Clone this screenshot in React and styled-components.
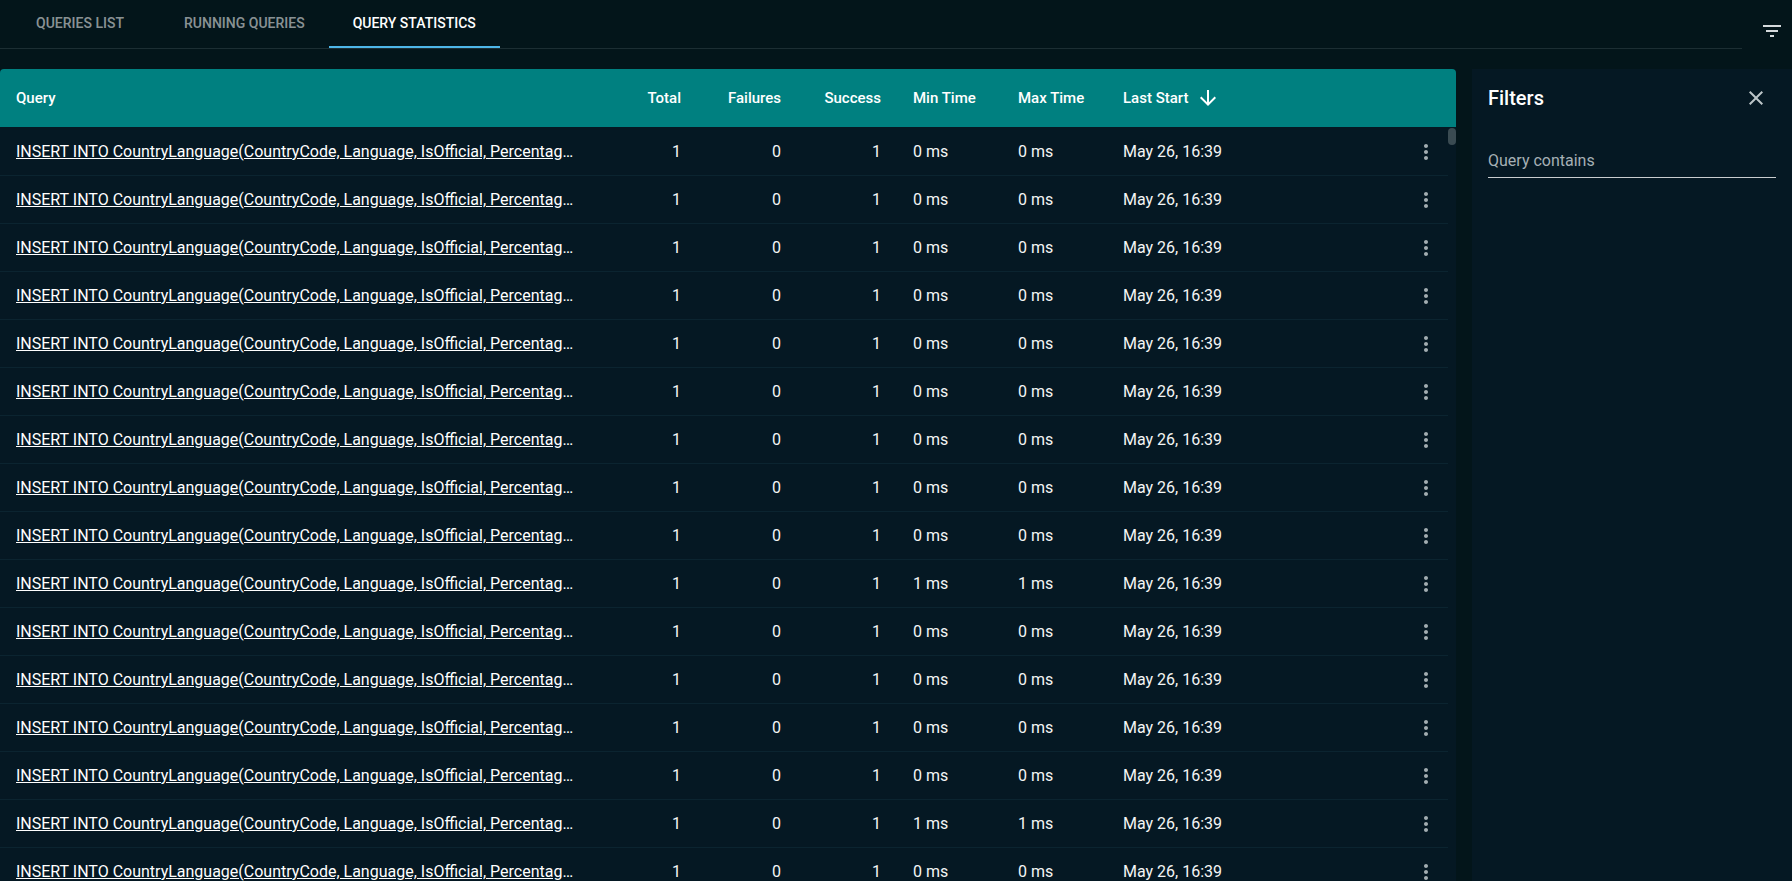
import React from "react";
import styled, { createGlobalStyle } from "styled-components";
import { MdArrowDownward, MdClose, MdFilterList, MdMoreVert } from "react-icons/md";

const GlobalStyle = createGlobalStyle`
  html, body {
    margin: 0;
    height: 100%;
    overflow: hidden;
    background: #03151a;
  }
  #root {
    height: 100%;
  }
  * {
    box-sizing: border-box;
  }
`

const COLUMNS = "558px 107px 100px 100px 137px 105px 1fr 44px";

const Page = styled.div`
  height: 100%;
  display: flex;
  flex-direction: column;
  font-family: Roboto, "Liberation Sans", sans-serif;
  color: #fff;
`
const TopBar = styled.div`
  display: flex;
  height: 69px;
  flex-shrink: 0;
`
const Tabs = styled.div`
  width: 1742px;
  height: 49px;
  display: flex;
  border-bottom: 1px solid #1c2e33;
`
const Tab = styled.div`
  min-width: 160px;
  height: 48px;
  padding: 0 24px;
  display: flex;
  align-items: center;
  justify-content: center;
  font-size: 14px;
  font-weight: 500;
  text-transform: uppercase;
  color: ${(p) => (p.$active ? "#fff" : "rgba(255, 255, 255, 0.55)")};
  border-bottom: 2px solid ${(p) => (p.$active ? "#4db6e8" : "transparent")};
`
const FilterToggle = styled.div`
  flex: 1;
  height: 62px;
  display: flex;
  align-items: center;
  justify-content: flex-end;
  padding-right: 8px;
  color: #d5dadc;
`
const Content = styled.div`
  flex: 1;
  min-height: 0;
  display: flex;
  gap: 16px;
`
const TablePanel = styled.div`
  position: relative;
  width: 1456px;
  display: flex;
  flex-direction: column;
  background: #051823;
  border-radius: 4px 4px 0 0;
  overflow: hidden;
`
const HeaderRow = styled.div`
  display: grid;
  grid-template-columns: ${COLUMNS};
  height: 59px;
  flex-shrink: 0;
  align-items: center;
  padding-left: 16px;
  background: #008080;
  border-bottom: 1px solid #051823;
  font-size: 15px;
  font-weight: 500;
`
const Row = styled.div`
  display: grid;
  grid-template-columns: ${COLUMNS};
  width: 1448px;
  height: 48px;
  flex-shrink: 0;
  align-items: center;
  padding-left: 16px;
  border-bottom: 1px solid #0b2430;
  font-size: 16px;
  color: #f4f5f5;
`
const Cell = styled.div`
  display: flex;
  align-items: center;
  justify-content: ${(p) => (p.$right ? "flex-end" : "flex-start")};
  padding-left: ${(p) => (p.$inset ? "32px" : "0")};
  white-space: nowrap;
`
const QueryLink = styled.a`
  display: block;
  overflow: hidden;
  text-overflow: ellipsis;
  white-space: nowrap;
  color: #fff;
  text-decoration: underline;
`
const SortIcon = styled(MdArrowDownward)`
  margin-left: 8px;
  font-size: 24px;
`
const RowMenu = styled.div`
  display: flex;
  align-items: center;
  justify-content: center;
  font-size: 24px;
  color: #a3adb1;
`
const ScrollThumb = styled.div`
  position: absolute;
  top: 59px;
  right: 0;
  width: 8px;
  height: 17px;
  border-radius: 4px;
  background: #3a4b52;
`
const FilterPanel = styled.div`
  width: 320px;
  padding: 0 16px;
  background: #051823;
`
const FilterHeader = styled.div`
  height: 58px;
  display: flex;
  align-items: center;
  justify-content: space-between;
  font-size: 20px;
  font-weight: 500;
`
const CloseButton = styled.div`
  display: flex;
  margin-right: 8px;
  font-size: 24px;
  color: #bcc5c8;
`
const FilterInput = styled.div`
  margin-top: 20px;
  height: 31px;
  padding-top: 4px;
  border-bottom: 1px solid #c9cdcf;
  font-size: 16px;
  color: #a6b0b5;
`

const rows = Array.from({ length: 20 }, (_, i) => (i === 9 || i === 14 ? 1 : 0));

const App = () => {
  return (
    <Page>
      <GlobalStyle />
      <TopBar>
        <Tabs>
          <Tab>Queries list</Tab>
          <Tab>Running queries</Tab>
          <Tab $active>Query statistics</Tab>
        </Tabs>
        <FilterToggle>
          <MdFilterList size={24} />
        </FilterToggle>
      </TopBar>
      <Content>
        <TablePanel>
          <HeaderRow>
            <Cell>Query</Cell>
            <Cell $right>Total</Cell>
            <Cell $right>Failures</Cell>
            <Cell $right>Success</Cell>
            <Cell $inset>Min Time</Cell>
            <Cell>Max Time</Cell>
            <Cell>
              Last Start
              <SortIcon />
            </Cell>
          </HeaderRow>
          {rows.map((time, i) => (
            <Row key={i}>
              <QueryLink>INSERT INTO CountryLanguage(CountryCode, Language, IsOfficial, Percentage)</QueryLink>
              <Cell $right>1</Cell>
              <Cell $right>0</Cell>
              <Cell $right>1</Cell>
              <Cell $inset>{time} ms</Cell>
              <Cell>{time} ms</Cell>
              <Cell>May 26, 16:39</Cell>
              <RowMenu>
                <MdMoreVert />
              </RowMenu>
            </Row>
          ))}
          <ScrollThumb />
        </TablePanel>
        <FilterPanel>
          <FilterHeader>
            Filters
            <CloseButton>
              <MdClose />
            </CloseButton>
          </FilterHeader>
          <FilterInput>Query contains</FilterInput>
        </FilterPanel>
      </Content>
    </Page>
  );
};

export default App;
